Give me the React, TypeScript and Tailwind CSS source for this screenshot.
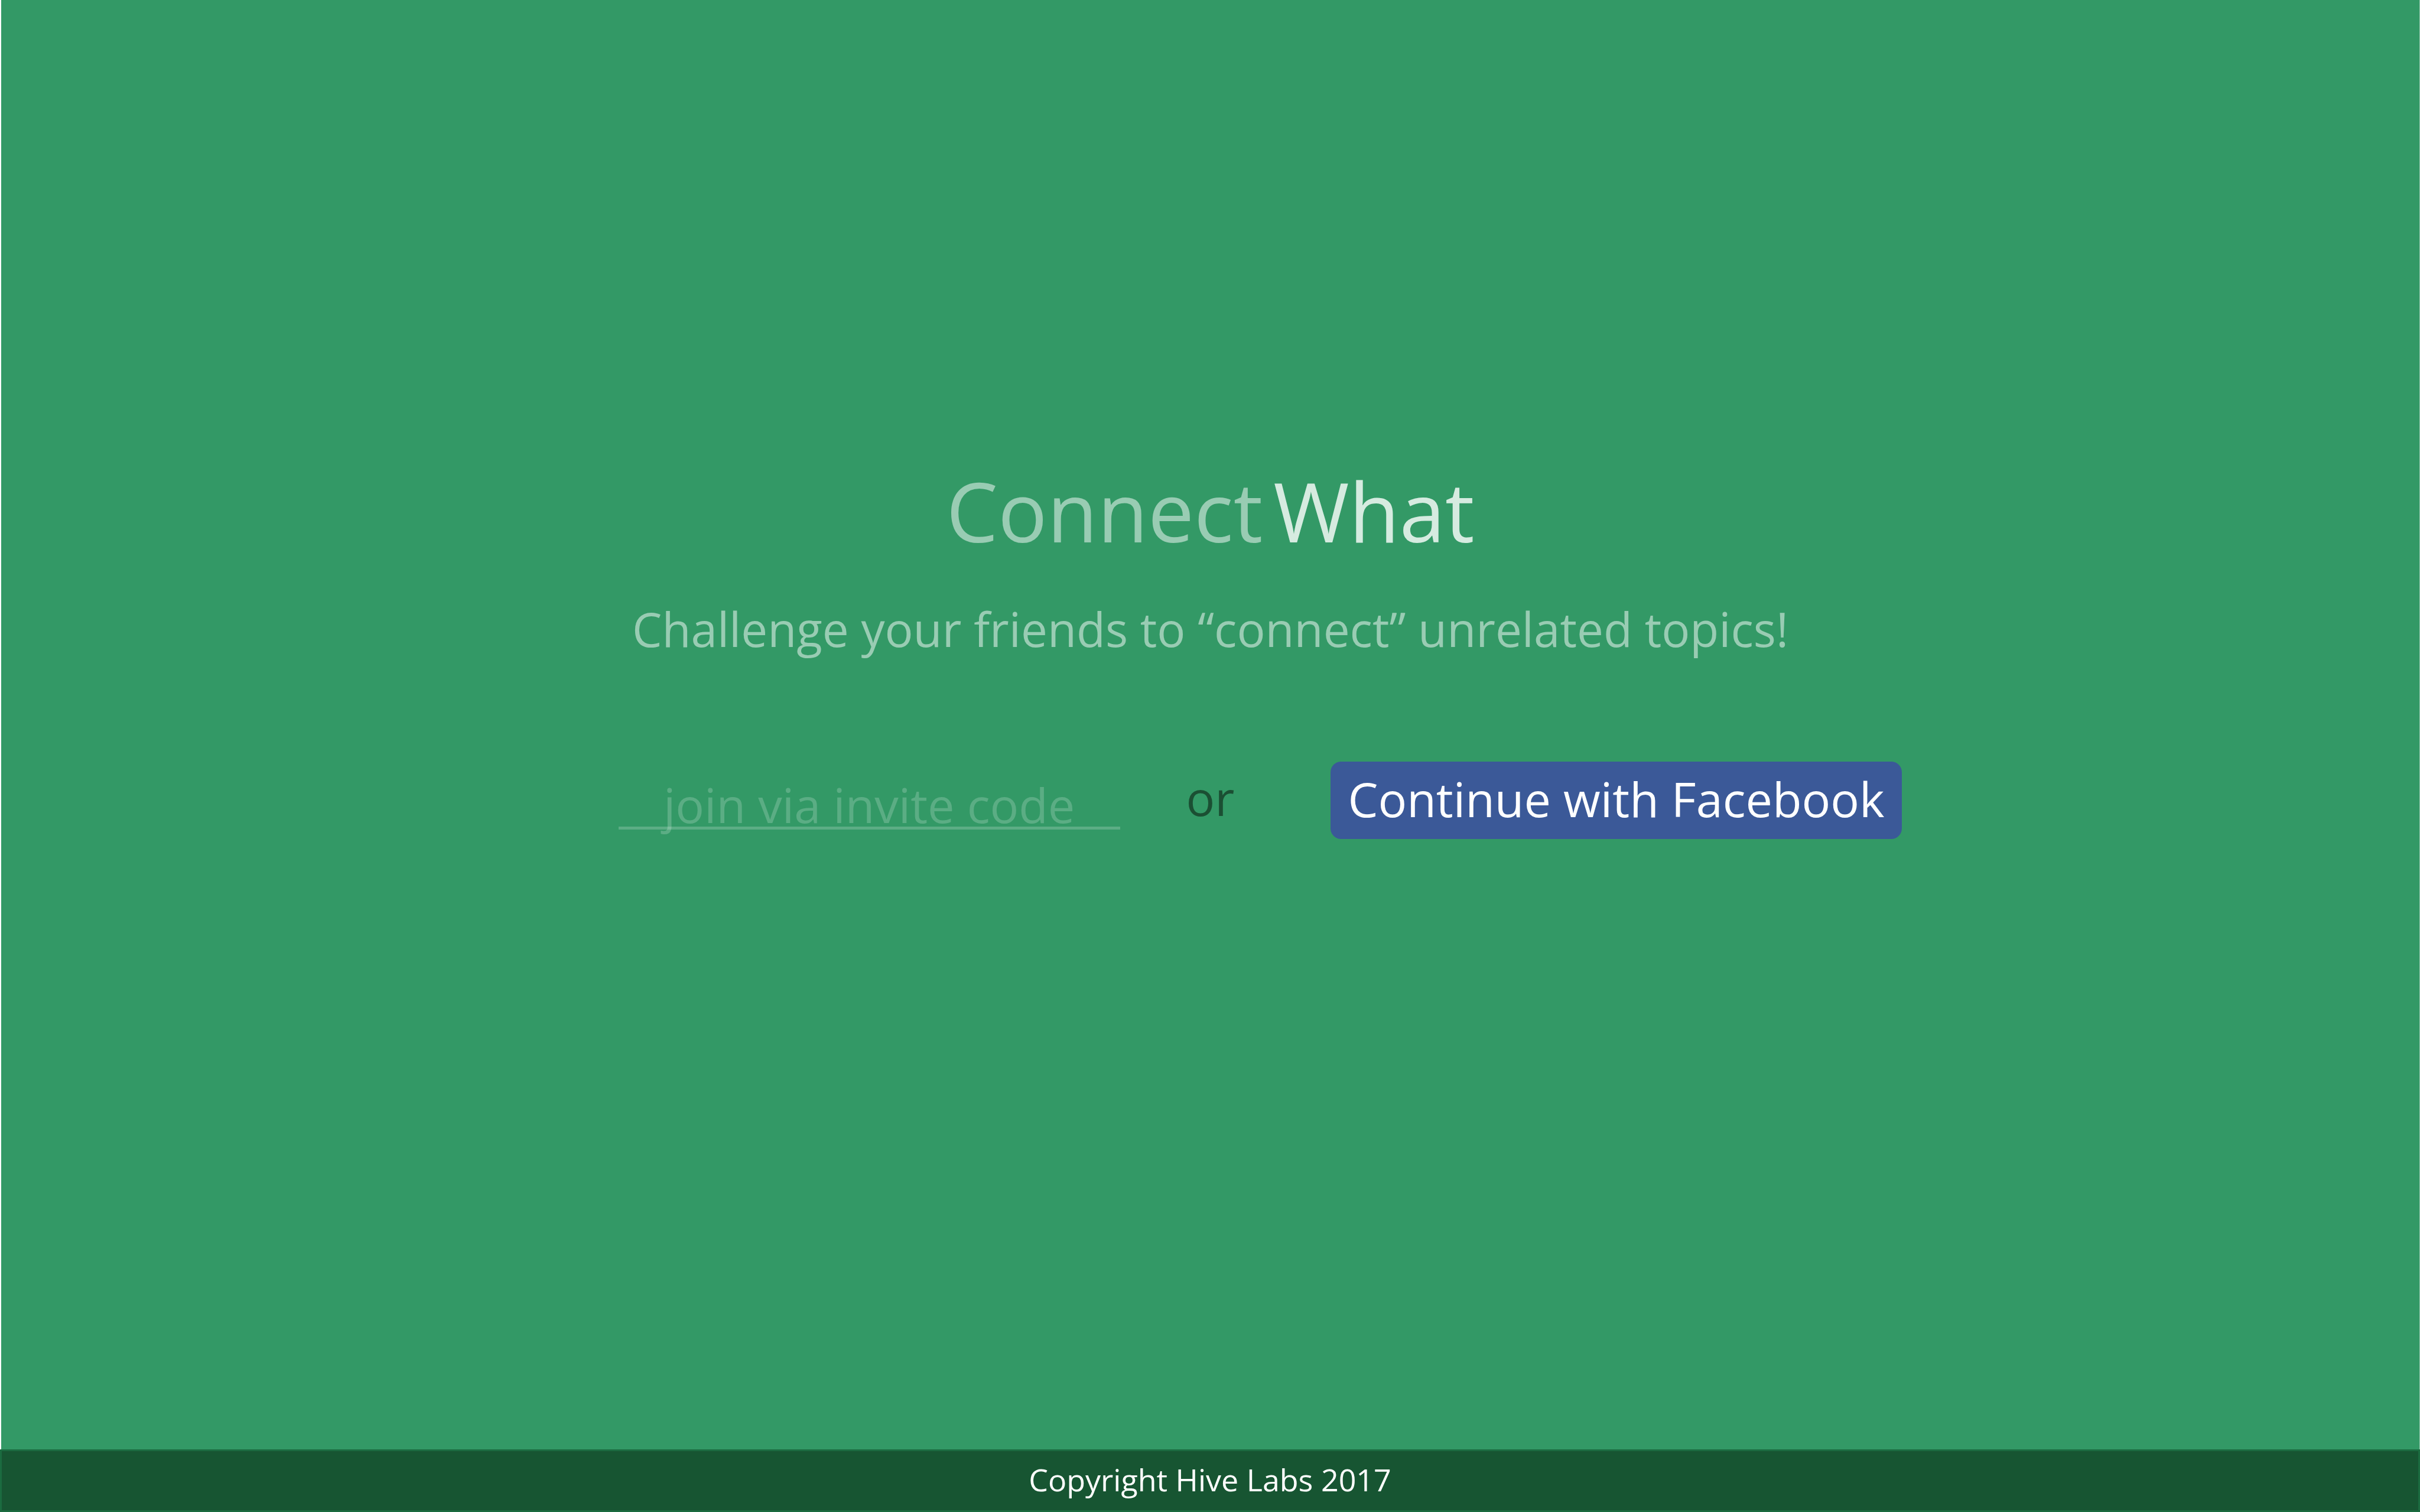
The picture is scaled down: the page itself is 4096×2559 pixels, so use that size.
import React from "react";

function Headline() {
  return (
    <>
      <h1 className="flex gap-[18px] text-[139px] leading-[160px]">
        <span className="text-white/50">Connect</span>
        <span className="text-white/80">What</span>
      </h1>
      <p className="mt-[72px] text-[80px] leading-[96px] text-white/50">
        Challenge your friends to “connect” unrelated topics!
      </p>
    </>
  );
}

function JoinForm() {
  return (
    <form
      className="mt-[177px] grid w-full grid-cols-[1fr_auto_1fr] text-[81px] leading-[96px]"
      onSubmit={(event) => event.preventDefault()}
    >
      <input
        type="text"
        name="invite"
        aria-label="Invite code"
        placeholder="join via invite code"
        className="mr-[112px] h-[131px] w-[849px] justify-self-end bg-[linear-gradient(#5cad85,#5cad85)] bg-[length:100%_5px] bg-[position:0_110px] bg-no-repeat pt-[13px] text-center text-white outline-none placeholder:text-white/20 placeholder:opacity-100"
      />
      <span className="self-center pb-[10px] text-[#1b4f33]">or</span>
      <button
        type="submit"
        className="ml-[163px] h-[131px] justify-self-start rounded-[18px] bg-[#3b5998] px-[29px] pb-[6px] whitespace-nowrap text-white"
      >
        Continue with Facebook
      </button>
    </form>
  );
}

export default function App() {
  return (
    <div className="flex min-h-screen flex-col bg-[#339966] font-['Open_Sans','Noto_Sans',sans-serif]">
      <main className="flex flex-1 flex-col items-center border-r border-l-2 border-r-[#99ccb3] border-l-white pt-[784px]">
        <Headline />
        <JoinForm />
      </main>
      <footer className="flex h-[106px] items-center justify-center border-[3px] border-[#1b6b40] bg-[#175532] pb-[4px] text-[52px] leading-[64px] text-white">
        Copyright Hive Labs 2017
      </footer>
    </div>
  );
}
